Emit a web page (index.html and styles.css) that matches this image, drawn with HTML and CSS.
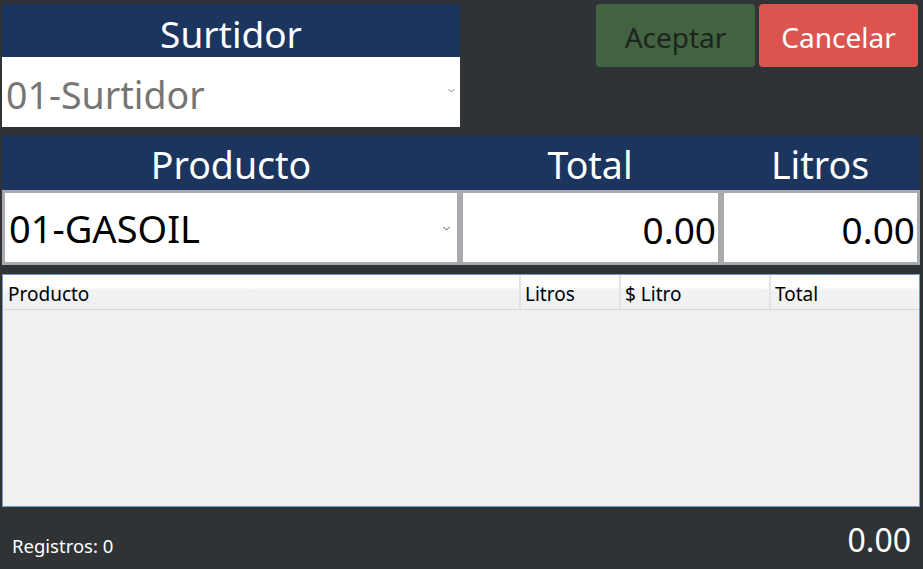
FILE: index.html
```html
<!DOCTYPE html>
<html lang="es">
<head>
<meta charset="utf-8">
<title>Surtidor</title>
<link rel="stylesheet" href="styles.css">
</head>
<body>
<div class="app">
  <div class="top">
    <div class="surtidor">
      <div class="head">Surtidor</div>
      <div class="select grey">
        <span>01-Surtidor</span>
        <svg class="chev" width="7" height="5" viewBox="0 0 7 5"><path d="M0.5 1 L3.5 4 L6.5 1" fill="none" stroke="#888" stroke-width="1"/></svg>
      </div>
    </div>
    <div class="buttons">
      <button class="btn ok">Aceptar</button>
      <button class="btn cancel">Cancelar</button>
    </div>
  </div>

  <div class="entry">
    <div class="heads">
      <div>Producto</div>
      <div>Total</div>
      <div>Litros</div>
    </div>
    <div class="inputs">
      <div class="field select">
        <span>01-GASOIL</span>
        <svg class="chev" width="7" height="5" viewBox="0 0 7 5"><path d="M0.5 1 L3.5 4 L6.5 1" fill="none" stroke="#555" stroke-width="1"/></svg>
      </div>
      <div class="field num">0.00</div>
      <div class="field num">0.00</div>
    </div>
  </div>

  <div class="grid">
    <div class="grid-head">
      <div class="c1">Producto</div>
      <div class="c2">Litros</div>
      <div class="c3">$ Litro</div>
      <div class="c4">Total</div>
    </div>
    <div class="grid-body"></div>
  </div>

  <div class="footer">
    <span class="count">Registros: 0</span>
    <span class="sum">0.00</span>
  </div>
</div>
</body>
</html>
```
FILE: styles.css
```css
* { box-sizing: border-box; }
html, body { margin: 0; padding: 0; }
body {
  background: #303336;
  font-family: "Noto Sans", "Open Sans", sans-serif;
  width: 923px;
  height: 569px;
  overflow: hidden;
}
.app {
  display: flex;
  flex-direction: column;
  height: 569px;
}
.top {
  display: flex;
  justify-content: space-between;
  padding: 4px 5px 0 2px;
}
.surtidor { width: 458px; }
.head {
  height: 53px;
  background: #1b355f;
  color: #fff;
  font-size: 37px;
  text-align: center;
  line-height: 60px;
}
.select {
  position: relative;
  background: #fff;
  display: flex;
  align-items: center;
}
.surtidor .select {
  height: 70px;
  font-size: 37.5px;
  padding-left: 4px;
  padding-top: 4px;
}
.grey { color: #767676; }
.chev {
  position: absolute;
  right: 5px;
  top: 31px;
}
.buttons {
  display: flex;
  gap: 4px;
}
.btn {
  width: 159px;
  height: 63px;
  border: none;
  border-radius: 4px;
  font-family: "Noto Sans", "Open Sans", sans-serif;
  font-size: 28px;
  padding: 0;
  line-height: 66px;
}
.ok { background: #42633f; color: #1f2420; }
.cancel { background: #dc5450; color: #fff; }

.entry {
  margin: 9px 3px 0 2px;
}
.heads {
  display: grid;
  grid-template-columns: 458px 260px 1fr;
  height: 54px;
  background: #1b355f;
  color: #fff;
  font-size: 37.5px;
  text-align: center;
  line-height: 58px;
}
.inputs {
  display: grid;
  grid-template-columns: 452px 255px 1fr;
  grid-template-rows: 69px;
  gap: 6px;
  padding: 3px;
  background: #a9aaae;
  height: 75px;
}
.field {
  background: #fff;
  font-size: 37px;
  color: #000;
  height: 69px;
  line-height: 74px;
  overflow: hidden;
}
.inputs .select { padding-left: 4px; font-size: 38px; }
.inputs .chev { top: 33px; right: 7px; }
.num { text-align: right; padding-right: 2px; }

.grid {
  margin: 9px 3px 0 2px;
  height: 233px;
  border: 1px solid #6f9ccc;
  display: flex;
  flex-direction: column;
  background: #f0f0f0;
}
.grid-head {
  display: flex;
  height: 35px;
  background: linear-gradient(#ffffff 0%, #ffffff 35%, #f1f2f4 45%, #eff0f2 100%);
  border-bottom: 1px solid #d7d7d7;
  font-size: 19px;
  color: #000;
  line-height: 38px;
}
.grid-head div { padding-left: 4px; border-left: 2px solid #e2e3e5; }
.c1 { width: 516px; border-left: none !important; padding-left: 5px !important; }
.c2 { width: 100px; }
.c3 { width: 150px; }
.c4 { flex: 1; }
.grid-body { flex: 1; }

.footer {
  flex: 1;
  display: flex;
  justify-content: space-between;
  align-items: flex-end;
  padding: 0 12px 11px 12px;
  color: #fff;
}
.count { font-size: 18.5px; line-height: 24px; }
.sum { font-size: 32px; line-height: 40px; margin-bottom: -2px; }
```
